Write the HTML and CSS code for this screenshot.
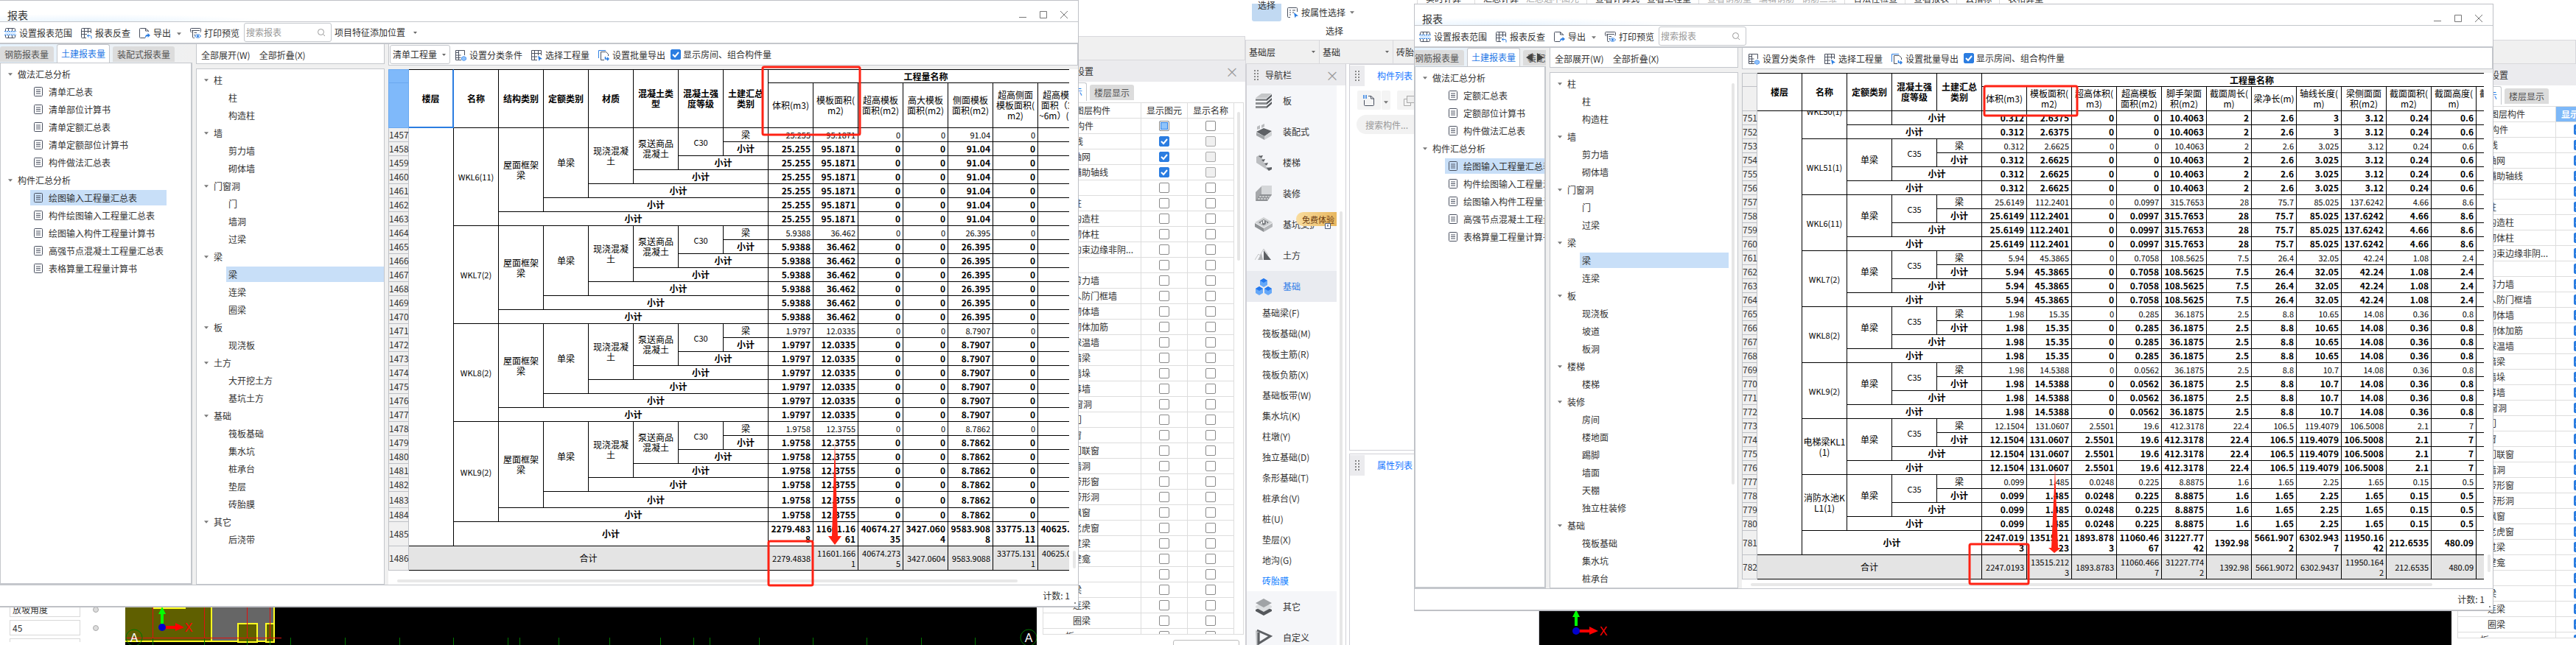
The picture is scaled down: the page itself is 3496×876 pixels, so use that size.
FILE: index.html
```html
<!DOCTYPE html>
<html lang="zh-CN">
<head>
    <meta charset="UTF-8">
    <meta name="viewport" content="width=device-width, initial-scale=1.0">
    <title>报表</title>
    <link rel="stylesheet" href="styles.css">
</head>
<body>
    <svg class="sprite" aria-hidden="true">
        <symbol id="i-range" viewBox="0 0 16 16"><path fill="#d6e9ff" d="M1 5h14v6H1z"/><path fill="none" stroke="#4a5160" d="M1.500 5V2.500a1 1 0 0 1 1-1h11a1 1 0 0 1 1 1V5M1.500 11v2.500a1 1 0 0 0 1 1h11a1 1 0 0 0 1-1V11M5.500 1.500V5M10.500 1.500V5M5.500 11v3.500M10.500 11v3.500"/><path fill="none" stroke="#2b7de1" stroke-dasharray="2 1" d="M0 5.500h16M0 10.500h16"/></symbol>
        <symbol id="i-table" viewBox="0 0 16 16"><path fill="none" stroke="#4a5160" d="M14.500 8V2.500a1 1 0 0 0-1-1h-11a1 1 0 0 0-1 1v11a1 1 0 0 0 1 1H8M1.500 5.500h13M1.500 9.500H9M5.500 1.500v13M10.500 1.500V8"/><path fill="none" stroke="#2b7de1" d="M9.500 11.500h4a1.500 1.500 0 0 1 1.500 1.500v2.500M11.500 9.500l-2 2 2 2"/></symbol>
        <symbol id="i-export" viewBox="0 0 16 16"><path fill="none" stroke="#4a5160" d="M13.500 6V5l-4-3.500h-7a1 1 0 0 0-1 1v11a1 1 0 0 0 1 1H9M9.500 1.500V5h4"/><path fill="#2b7de1" d="M9 15c0-4 1-5 3.500-5V8l3.500 3-3.500 3v-2C11 12 10 13 9 15z"/></symbol>
        <symbol id="i-print" viewBox="0 0 16 16"><path fill="none" stroke="#4a5160" d="M3.500 6.500h-1a1 1 0 0 1-1-1v-3a1 1 0 0 1 1-1h12a1 1 0 0 1 1 1v3a1 1 0 0 1-1 1M3 4.500h11M4.500 4.500v9a1 1 0 0 0 1 1H7M6.500 7.500H10M6.500 10.500H8"/><path fill="#fff" stroke="#2b7de1" d="M7.500 12c2-3 6-3 8 0-2 3-6 3-8 0z"/><circle cx="11.500" cy="12" r="1.500" fill="#2b7de1"/></symbol>
        <symbol id="i-search" viewBox="0 0 12 12"><circle cx="5.500" cy="5.500" r="4" fill="none" stroke="#999"/><path stroke="#999" d="M8.500 8.500l2.500 2.500"/></symbol>
        <symbol id="i-class" viewBox="0 0 16 16"><path fill="none" stroke="#4a5160" d="M13.500 8V1.500h-12v13H9M5.500 1.500v13M1.500 4.500h4M1.500 8h7M1.500 11.500h7"/><path fill="#8fc1fb" stroke="#5a9df0" d="M12.500 9.500l3 1.500v3l-3 1.500-3-1.500v-3z"/></symbol>
        <symbol id="i-pick" viewBox="0 0 16 16"><path fill="none" stroke="#4a5160" d="M14.500 8V1.500h-13v13H9M1.500 5.500h13M1.500 10H9M5.500 1.500v13M10.500 1.500V8"/><path fill="#2b7de1" d="M10 8.500l6 4.500-3 .5-1.500 2.500z"/></symbol>
        <symbol id="i-batch" viewBox="0 0 16 16"><path fill="none" stroke="#2b7de1" d="M1.500 12V1.500H11"/><path fill="none" stroke="#4a5160" d="M14.500 9V6.500l-3-3h-7v11H9"/><path fill="none" stroke="#2b7de1" stroke-width="1.500" d="M10.500 10v3h4M13 11l2 2-2 2"/></symbol>
        <symbol id="i-doc" viewBox="0 0 12 13"><rect x=".5" y=".5" width="11" height="12" rx="1" fill="none" stroke="#4a5160"/><path stroke="#4a5160" d="M3 4h6M3 6.500h6M3 9h6"/></symbol>
        <symbol id="i-attr" viewBox="0 0 16 16"><path fill="none" stroke="#4a5160" d="M14.500 7V2.500a1 1 0 0 0-1-1h-11a1 1 0 0 0-1 1v11a1 1 0 0 0 1 1H5M4 5h2M8 5h4M4 8h2M8 8h2M4 11h2"/><path fill="#2b7de1" d="M10 8l6 4.500-3 .5-1.500 2.500z"/></symbol>
        <symbol id="i-new" viewBox="0 0 16 16"><path fill="none" stroke="#4a5160" d="M7 1.500h4l3.500 3.500v8.500a1 1 0 0 1-1 1h-11a1 1 0 0 1-1-1V7M10.500 1.500V5h4"/><path stroke="#2b7de1" stroke-width="5" stroke-dasharray="1 1" d="M0 2.500h5"/></symbol>
        <symbol id="i-copy" viewBox="0 0 16 16"><rect x="5.500" y="1.500" width="11" height="9" fill="#eee" stroke="#aaa"/><path fill="none" stroke="#aaa" d="M5 5.500H1.500v9h9V11"/></symbol>
        <symbol id="i-lock" viewBox="0 0 10 10"><path fill="#fff" stroke="#4a5a78" d="M1.500 2.500h7v7h-7z"/><path stroke="#4a5a78" d="M5 4v3M4 5h2"/></symbol>
        <symbol id="n-slab" viewBox="0 0 24 24"><path fill="#c4c6c8" d="M1 8L9 2h14l-7 6z"/><path fill="#8e9194" d="M1 9h15v3H1zM1 14h15v3H1zM1 19h15v3H1z"/><path fill="#55585c" d="M16 9l7-6v3l-7 6zM16 14l7-6v3l-7 6zM16 19l7-6v3l-7 6z"/></symbol>
        <symbol id="n-prefab" viewBox="0 0 24 24"><path fill="#b9bbbe" d="M3 5l4-2v5L3 9zM9 3l4-2v4L9 7z"/><path fill="#5d6064" d="M2 12l10-5 11 4-10 7z"/><path fill="#a0a3a6" d="M2 13l11 5v5L2 17z"/><path fill="#d0d2d4" d="M13 18l10-6v5l-10 6z"/></symbol>
        <symbol id="n-stair" viewBox="0 0 24 24"><path fill="#bcbec1" d="M2 4l5-3v4l4 2v4l4 2v4l4 2v4L2 12z"/><path fill="#5d6064" d="M5 3l6-1-2 4zM9 8l5-1-2 4zM13 13l5-1-2 4zM16 19l7-1v3l-4 2z"/></symbol>
        <symbol id="n-finish" viewBox="0 0 24 24"><path fill="#d5d7d9" d="M9 1h14v14H9z"/><path fill="#a6a8ab" d="M1 10l8-8v12l-8 8z"/><path fill="#8e9194" d="M1 22l6-9h16l-6 9z"/><path stroke="#fff" stroke-dasharray="3 1" d="M6 16h14M4 19h14"/></symbol>
        <symbol id="n-pit" viewBox="0 0 24 24"><path fill="#cfd1d3" d="M12 2l12 7-12 7L0 9z"/><path fill="#7b7e82" d="M12 5l7 4-7 4-7-4z"/><path fill="#e6e7e8" d="M11 6h2v4h-2zM8 8h2v3H8zM15 8h1v3h-1z"/><path fill="#8e9194" d="M0 10l12 7v5L0 15z"/><path fill="#b4b6b9" d="M24 10l-12 7v5l12-7z"/></symbol>
        <symbol id="n-earth" viewBox="0 0 24 24"><path fill="none" stroke="#c4c6c8" d="M0 18l5-8 2 2 5-9 6 8"/><path fill="#b4b6b9" d="M4 18l5-9 2 9z"/><path fill="#5d6064" d="M12 18V5l10 13z"/></symbol>
        <symbol id="n-found" viewBox="0 0 24 24"><g fill="#66a8f8"><path d="M12 1l5 3v6l-5 3-5-3V4z"/><path d="M6 12l5 3v6l-5 3-5-3v-6z"/><path d="M18 12l5 3v6l-5 3-5-3v-6z"/></g><g fill="#2478ee"><path d="M12 1l5 3-5 3-5-3zM6 12l5 3-5 3-5-3zM18 12l5 3-5 3-5-3z"/></g></symbol>
        <symbol id="n-other" viewBox="0 0 24 24"><path fill="#55585c" d="M1 16l11-5 11 5v2l-11 6-11-6z"/><path fill="#dcdee0" d="M1 11l11-5 11 5v2l-11 6-11-6z"/><path fill="#a0a3a6" d="M12 1l11 6-11 6L1 7z"/></symbol>
        <symbol id="n-custom" viewBox="0 0 24 24"><path fill="#c4c6c8" d="M1 2l6 4v12l-4 6H2z"/><path fill="none" stroke="#5d6064" stroke-width="3" d="M3 2l18 8L5 20V5"/></symbol>
        <symbol id="i-caret" viewBox="0 0 7 4"><path fill="#777" d="M0 0h7L3.500 4z"/></symbol>
    </svg>

    <div class="desktop">
        <div class="column">
            <div class="app">
                <div class="ribbon"></div>
                <div class="level-bar"></div>
                <div class="workspace">
                    <section class="prop-panel">
                        <div class="prop-row"><input aria-label="放坡角度名称" value="放坡角度"><i></i></div>
                        <div class="prop-row"><input aria-label="放坡角度" value="45"><i></i></div>
                        <div class="prop-row"><input aria-label="混凝土" value="混凝土"></div>
                    </section>
                    <div class="canvas">
                        <svg width="1237" height="52" viewBox="170 824 1237 52">
                            <path fill="#5f5f00" d="M170 824h116v48H170z"/>
                            <path fill="#666" d="M288 824h83v46h-83z"/>
                            <path fill="none" stroke="#ff2" stroke-width="2" d="M207 826h45M287 824v48M372 824v48M170 871h203"/>
                            <path fill="#5f5f00" stroke="#ff2" stroke-width="2" d="M323 847h26v25h-26zM361 847h11v25h-11z"/>
                            <path stroke="#e01010" d="M207.500 824v42M277.500 824v42M335.500 824v42M366.500 824v42M170 866.500h212"/>
                            <path stroke="#070" d="M207.500 867v9M277.500 867v9M335.500 867v9M366.500 867v9M394.500 866v10M468.500 866v10M542.500 866v10M615.500 866v10M689.500 866v10M705.500 866v10M758.500 866v10M827.500 866v10M896.500 866v10M941.500 866v10M963.500 866v10M1030.500 866v10M1103.500 866v10M1176.500 866v10M1250.500 866v10M1323.500 866v10"/>
                            <circle cx="182" cy="866" r="11" fill="none" stroke="#070"/>
                            <circle cx="1396" cy="866" r="11" fill="none" stroke="#070"/>
                            <path fill="#0f0" d="M218 848v-14h-3l5-10 5 10h-3v14z"/>
                            <path fill="#f00" d="M224 850h14v-4l12 6-12 5v-3h-14z"/>
                            <circle cx="220" cy="852" r="5" fill="#00c"/>
                            <text x="182" y="872" class="axis">A</text>
                            <text x="1396" y="872" class="axis">A</text>
                            <text x="256" y="858" class="axis-x">X</text>
                        </svg>
                    </div>
                    <section class="layer-panel" data-state="mixed"></section>
                </div>
            </div>

            <div class="window window-left">
                <header class="titlebar">
                    <h1>报表</h1>
                    <div class="win-buttons">
                        <button aria-label="最小化"><svg viewBox="0 0 10 10"><path d="M0 8.500h10"/></svg></button>
                        <button aria-label="最大化"><svg viewBox="0 0 10 10"><path d="M.5.500h9v9h-9z"/></svg></button>
                        <button aria-label="关闭"><svg viewBox="0 0 10 10"><path d="M0 0l10 10M10 0L0 10"/></svg></button>
                    </div>
                </header>
                <div class="toolbar">
                    <button><svg class="ico"><use href="#i-range"/></svg>设置报表范围</button>
                    <button><svg class="ico"><use href="#i-table"/></svg>报表反查</button>
                    <button><svg class="ico"><use href="#i-export"/></svg>导出<svg class="caret"><use href="#i-caret"/></svg></button>
                    <button><svg class="ico"><use href="#i-print"/></svg>打印预览</button>
                    <label class="search"><input type="search" placeholder="搜索报表" aria-label="搜索报表"><svg><use href="#i-search"/></svg></label>
                    <select class="feature" aria-label="项目特征添加位置"><option>项目特征添加位置</option></select>
                </div>
                <div class="content">
                    <div class="side">
                        <div class="tabs">
                            <button>钢筋报表量</button>
                            <button class="active">土建报表量</button>
                            <button>装配式报表量</button>
                        </div>
                        <div class="tree reports" id="reportsLeft"></div>
                    </div>
                    <div class="middle">
                        <div class="tree-head"><button>全部展开(W)</button><button>全部折叠(X)</button></div>
                        <div class="tree" id="partsLeft"></div>
                    </div>
                    <div class="main">
                        <div class="sheet-head">
                            <select class="bill" aria-label="工程量类型"><option>清单工程量</option></select>
                            <button><svg class="ico"><use href="#i-class"/></svg>设置分类条件</button>
                            <button><svg class="ico"><use href="#i-pick"/></svg>选择工程量</button>
                            <button><svg class="ico"><use href="#i-batch"/></svg>设置批量导出</button>
                            <label><input type="checkbox" checked>显示房间、组合构件量</label>
                        </div>
                        <div class="sheet tall selected" id="sheetLeft"></div>
                        <div class="scroll-x"></div>
                        <div class="scroll-y"></div>
                    </div>
                </div>
                <footer class="status">计数: 1</footer>
                <svg class="marks">
                    <rect x="1036" y="91" width="132" height="92" rx="2"/>
                    <rect x="1044" y="735" width="60" height="60" rx="2"/>
                    <path d="M1134 600l4 128h5l-9 12-9-12h5z"/>
                </svg>
            </div>
        </div>

        <div class="column">
            <div class="ribbon-labels">
                <span>实时计算</span>
                <span>汇总计算<em>汇总选中图元</em></span>
                <span>查看计算式<b>查看工程量</b></span>
                <span><em>查看钢筋量</em><em>编辑钢筋</em><em>钢筋三维</em></span>
                <span>合法性检查</span>
                <span>查看报表</span>
                <span>云指标</span>
                <span>表格算量</span>
            </div>
            <div class="app">
                <div class="ribbon">
                    <button class="pick">选择</button>
                    <div class="pick-group">
                        <button><svg class="ico"><use href="#i-attr"/></svg>按属性选择<svg class="caret"><use href="#i-caret"/></svg></button>
                        <span>选择</span>
                    </div>
                </div>
                <div class="level-bar">
                    <select aria-label="楼层"><option>基础层</option></select>
                    <select aria-label="构件大类"><option>基础</option></select>
                    <select aria-label="构件类型"><option>砖胎膜</option></select>
                </div>
                <div class="workspace">
                    <nav class="nav-panel">
                        <div class="panel-head"><i class="grip"></i>导航栏<button class="close" aria-label="关闭">×</button></div>
                        <div class="nav-list" id="navList"></div>
                    </nav>
                    <div class="component-panels">
                        <section>
                            <div class="dock-tab"><i class="grip"></i><a href="#components">构件列表</a></div>
                            <div class="component-tools">
                                <button aria-label="新建"><svg class="ico"><use href="#i-new"/></svg></button>
                                <button class="drop" aria-label="新建选项"><svg class="caret"><use href="#i-caret"/></svg></button>
                                <button aria-label="复制"><svg class="ico"><use href="#i-copy"/></svg></button>
                            </div>
                            <input class="pill" placeholder="搜索构件..." aria-label="搜索构件">
                        </section>
                        <section>
                            <div class="dock-tab"><i class="grip"></i><a href="#attributes">属性列表</a></div>
                        </section>
                    </div>
                    <div class="canvas">
                        <svg width="1238" height="52" viewBox="2089 829 1238 52">
                            <path fill="#0f0" d="M2137 850v-12h-3l5-10 5 10h-3v12z"/>
                            <path fill="#f00" d="M2143 855h14v-4l12 6-12 5v-3h-14z"/>
                            <circle cx="2139" cy="857" r="5" fill="#00c"/>
                            <text x="2176" y="863" class="axis-x">X</text>
                        </svg>
                    </div>
                    <section class="layer-panel" data-state="all"></section>
                </div>

                <div class="window window-right">
                    <header class="titlebar">
                        <h1>报表</h1>
                        <div class="win-buttons">
                            <button aria-label="最小化"><svg viewBox="0 0 10 10"><path d="M0 8.500h10"/></svg></button>
                            <button aria-label="最大化"><svg viewBox="0 0 10 10"><path d="M.5.500h9v9h-9z"/></svg></button>
                            <button aria-label="关闭"><svg viewBox="0 0 10 10"><path d="M0 0l10 10M10 0L0 10"/></svg></button>
                        </div>
                    </header>
                    <div class="toolbar">
                        <button><svg class="ico"><use href="#i-range"/></svg>设置报表范围</button>
                        <button><svg class="ico"><use href="#i-table"/></svg>报表反查</button>
                        <button><svg class="ico"><use href="#i-export"/></svg>导出<svg class="caret"><use href="#i-caret"/></svg></button>
                        <button><svg class="ico"><use href="#i-print"/></svg>打印预览</button>
                        <label class="search"><input type="search" placeholder="搜索报表" aria-label="搜索报表"><svg><use href="#i-search"/></svg></label>
                    </div>
                    <div class="content">
                        <div class="side narrow">
                            <div class="tabs">
                                <button>钢筋报表量</button>
                                <button class="active">土建报表量</button>
                                <button>装配式报表量</button>
                                <svg class="tab-arrows" viewBox="0 0 24 12"><path d="M9 0v12L0 6zM15 0v12l9-6z"/></svg>
                            </div>
                            <div class="tree reports" id="reportsRight"></div>
                        </div>
                        <div class="middle">
                            <div class="tree-head"><button>全部展开(W)</button><button>全部折叠(X)</button></div>
                            <div class="tree scrolling" id="partsRight"></div>
                        </div>
                        <div class="main">
                            <div class="sheet-head">
                                <button><svg class="ico"><use href="#i-class"/></svg>设置分类条件</button>
                                <button><svg class="ico"><use href="#i-pick"/></svg>选择工程量</button>
                                <button><svg class="ico"><use href="#i-batch"/></svg>设置批量导出</button>
                                <label><input type="checkbox" checked>显示房间、组合构件量</label>
                            </div>
                            <div class="sheet" id="sheetRight"></div>
                            <div class="scroll-x"></div>
                            <div class="scroll-y"></div>
                        </div>
                    </div>
                    <footer class="status">计数: 1</footer>
                    <svg class="marks">
                        <rect x="774" y="112" width="126" height="40" rx="2"/>
                        <rect x="754" y="734" width="80" height="54" rx="2"/>
                        <path d="M870 632l4 107h4l-9 7-8-7h4z"/>
                    </svg>
                </div>
            </div>
        </div>
    </div>

    <script>
        const reportTrees = {
            reportsLeft: [
                ['做法汇总分析', '清单汇总表', '清单部位计算书', '清单定额汇总表', '清单定额部位计算书', '构件做法汇总表'],
                ['构件汇总分析', '*绘图输入工程量汇总表', '构件绘图输入工程量汇总表', '绘图输入构件工程量计算书', '高强节点混凝土工程量汇总表', '表格算量工程量计算书']
            ],
            reportsRight: [
                ['做法汇总分析', '定额汇总表', '定额部位计算书', '构件做法汇总表'],
                ['构件汇总分析', '*绘图输入工程量汇总表', '构件绘图输入工程量汇总表', '绘图输入构件工程量计算书', '高强节点混凝土工程量汇总表', '表格算量工程量计算书']
            ]
        };
        const partTrees = {
            partsLeft: [
                ['柱', '柱', '构造柱'], ['墙', '剪力墙', '砌体墙'], ['门窗洞', '门', '墙洞', '过梁'],
                ['梁', '*梁', '连梁', '圈梁'], ['板', '现浇板'], ['土方', '大开挖土方', '基坑土方'],
                ['基础', '筏板基础', '集水坑', '桩承台', '垫层', '砖胎膜'], ['其它', '后浇带']
            ],
            partsRight: [
                ['柱', '柱', '构造柱'], ['墙', '剪力墙', '砌体墙'], ['门窗洞', '门', '过梁'],
                ['梁', '*梁', '连梁'], ['板', '现浇板', '坡道', '板洞'], ['楼梯', '楼梯'],
                ['装修', '房间', '楼地面', '踢脚', '墙面', '天棚', '独立柱装修'],
                ['基础', '筏板基础', '集水坑', '桩承台']
            ]
        };

        function treeHtml(groups, icon) {
            const leaf = (text) => {
                const on = text[0] === '*';
                return `<li><span class="leaf${on ? ' on' : ''}">${icon}${on ? text.slice(1) : text}</span></li>`;
            };
            return '<ul>' + groups.map(([head, ...items]) =>
                `<li><span class="branch"><svg class="caret"><use href="#i-caret"/></svg>${head}</span><ul>${items.map(leaf).join('')}</ul></li>`
            ).join('') + '</ul>';
        }
        for (const id in reportTrees) {
            document.getElementById(id).innerHTML = treeHtml(reportTrees[id], '<svg><use href="#i-doc"/></svg>');
        }
        for (const id in partTrees) {
            document.getElementById(id).innerHTML = treeHtml(partTrees[id], '');
        }

        // Each group is a chain of labels, every level closes with its own subtotal row
        const leftLabels = ['屋面框架梁', '单梁', '现浇混凝土', '泵送商品混凝土', 'C30', '梁'];
        const rightLabels = ['单梁', 'C35', '梁'];
        const sheets = {
            sheetLeft: {
                first: 1457,
                skip: 0,
                heads: ['楼层', '名称', '结构类别', '定额类别', '材质', '混凝土类型', '混凝土强度等级', '土建汇总类别'],
                values: ['体积(m3)', '模板面积(m2)', '超高模板面积(m2)', '高大模板面积(m2)', '侧面模板面积(m2)', '超高侧面模板面积(m2)', '超高模板<br>面积（3.6<br>~6m）(m2)'],
                labels: leftLabels,
                roomy: 1483,
                groups: [
                    ['WKL6(11)', '25.255 95.1871 0 0 91.04 0 0'],
                    ['WKL7(2)', '5.9388 36.462 0 0 26.395 0 0'],
                    ['WKL8(2)', '1.9797 12.0335 0 0 8.7907 0 0'],
                    ['WKL9(2)', '1.9758 12.3755 0 0 8.7862 0 0']
                ],
                total: '2279.4838 11601.1661 40674.2735 3427.0604 9583.9088 33775.1311 40625.0411'
            },
            sheetRight: {
                first: 749,
                skip: 2,
                heads: ['楼层', '名称', '定额类别', '混凝土强度等级', '土建汇总类别'],
                values: ['体积(m3)', '模板面积(m2)', '超高体积(m3)', '超高模板面积(m2)', '脚手架面积(m2)', '截面周长(m)', '梁净长(m)', '轴线长度(m)', '梁侧面面积(m2)', '截面面积(m2)', '截面高度(m)', '截面宽度(m)'],
                labels: rightLabels,
                groups: [
                    ['WKL50(1)', '0.312 2.6375 0 0 10.4063 2 2.6 3 3.12 0.24 0.6 0.4'],
                    ['WKL51(1)', '0.312 2.6625 0 0 10.4063 2 2.6 3.025 3.12 0.24 0.6 0.4'],
                    ['WKL6(11)', '25.6149 112.2401 0 0.0997 315.7653 28 75.7 85.025 137.6242 4.66 8.6 5.4'],
                    ['WKL7(2)', '5.94 45.3865 0 0.7058 108.5625 7.5 26.4 32.05 42.24 1.08 2.4 1.35'],
                    ['WKL8(2)', '1.98 15.35 0 0.285 36.1875 2.5 8.8 10.65 14.08 0.36 0.8 0.45'],
                    ['WKL9(2)', '1.98 14.5388 0 0.0562 36.1875 2.5 8.8 10.7 14.08 0.36 0.8 0.45'],
                    ['电梯梁KL1(1)', '12.1504 131.0607 2.5501 19.6 412.3178 22.4 106.5 119.4079 106.5008 2.1 7 4.2'],
                    ['消防水池KL1(1)', '0.099 1.485 0.0248 0.225 8.8875 1.6 1.65 2.25 1.65 0.15 0.5 0.3']
                ],
                total: '2247.0193 13515.2123 1893.8783 11060.4667 31227.7742 1392.98 5661.9072 6302.9437 11950.1642 212.6535 480.09 290.5'
            }
        };

        function sheetHtml(s) {
            const cols = '<colgroup><col class="no">' + '<col>'.repeat(s.heads.length + s.values.length) + '</colgroup>';
            const depth = s.labels.length + 1;
            const count = s.groups.length * depth;
            const nums = (line) => line.split(' ').map(v => `<td class="num">${v}</td>`).join('');
            const label = (text, span) => `<td rowspan="${span}"${/^[\w()]+$/.test(text) ? ' class="code"' : ''}>${text}</td>`;

            const head = '<thead><tr class="cap"><th class="no"></th>' +
                s.heads.map((h, i) => `<th rowspan="2"${i ? '' : ' class="floor"'}>${h}</th>`).join('') +
                `<th colspan="${s.values.length}" class="group">工程量名称</th></tr>` +
                '<tr class="names"><th class="no"></th>' +
                s.values.map(v => `<th${v.includes('<br>') ? ' class="preset"' : ''}>${v}</th>`).join('') + '</tr></thead>';

            let no = s.first;
            let rows = '';
            s.groups.forEach(([name, line], g) => {
                for (let r = 0; r < depth; r++) {
                    const cls = [r ? 'sub' : '', no === s.roomy ? 'roomy' : ''].join(' ').trim();
                    rows += `<tr${cls ? ` class="${cls}"` : ''}><th class="no">${no++}</th>`;
                    if (g === 0 && r === 0) rows += `<td class="floor" rowspan="${count + 1}"></td>`;
                    if (r === 0) {
                        rows += [name, ...s.labels].map((t, i) => label(t, depth - i)).join('');
                    } else {
                        rows += `<td colspan="${r}">小计</td>`;
                    }
                    rows += nums(line) + '</tr>';
                }
            });
            rows += `<tr class="sub last"><th class="no">${no++}</th><td colspan="${depth}">小计</td>${nums(s.total)}</tr>`;
            rows += `<tr class="total"><th class="no">${no}</th><td colspan="${depth + 1}">合计</td>${nums(s.total)}</tr>`;

            return `<table class="head">${cols}${head}</table>` +
                `<div class="rows"><table${s.skip ? ' class="scrolled"' : ''}>${cols}<tbody>${rows}</tbody></table></div>`;
        }
        for (const id in sheets) {
            document.getElementById(id).innerHTML = sheetHtml(sheets[id]);
        }

        const layers = [
            ['所有构件', 'all'], ['轴线', 'axis'], ['-轴网', 'axis'], ['-辅助轴线', 'axis'],
            ['柱'], ['-柱'], ['-构造柱'], ['-砌体柱'], ['-约束边缘非阴...'],
            ['墙'], ['-剪力墙'], ['-人防门框墙'], ['-砌体墙'], ['-砌体加筋'], ['-保温墙'], ['-暗梁'], ['-墙垛'], ['-幕墙'],
            ['门窗洞'], ['-门'], ['-窗'], ['-门联窗'], ['-墙洞'], ['-带形窗'], ['-带形洞'], ['-飘窗'], ['-老虎窗'], ['-过梁'], ['-壁龛'],
            ['梁'], ['-梁'], ['-连梁'], ['-圈梁'], ['板']
        ];
        document.querySelectorAll('.layer-panel').forEach(panel => {
            const every = panel.dataset.state === 'all';
            const rows = layers.map(([text, kind]) => {
                const child = text[0] === '-';
                const name = child ? text.slice(1) : text;
                const cls = kind === 'all' ? 'root' : child ? 'child' : 'parent';
                const shown = every || kind === 'axis' ? ' checked' : '';
                const partial = !every && kind === 'all' ? ' class="partial"' : '';
                const off = kind === 'axis' ? ' disabled' : '';
                return `<tr><td class="${cls}">${name}</td>` +
                    `<td><input type="checkbox" aria-label="显示图元 ${name}"${partial}${shown}></td>` +
                    `<td><input type="checkbox" aria-label="显示名称 ${name}"${off}></td></tr>`;
            }).join('');
            panel.innerHTML = '<div class="panel-head"><i class="grip"></i>显示设置<button class="close" aria-label="关闭">×</button></div>' +
                '<div class="tabs"><button class="active">图层显示</button><button>楼层显示</button></div>' +
                '<div class="layer-box"><table><colgroup><col class="layer"><col><col></colgroup>' +
                `<thead><tr><th class="layer-title">图层构件</th><th${every ? ' class="picked"' : ''}>显示图元</th><th>显示名称</th></tr></thead>` +
                `<tbody>${rows}</tbody></table></div><div class="layer-foot"><button aria-label="恢复默认"></button></div>`;
        });

        const nav = [
            ['板', 'slab'], ['装配式', 'prefab'], ['楼梯', 'stair'], ['装修', 'finish'], ['基坑支护', 'pit'], ['土方', 'earth'],
            ['基础', 'found', ['基础梁(F)', '筏板基础(M)', '筏板主筋(R)', '筏板负筋(X)', '基础板带(W)', '集水坑(K)', '柱墩(Y)', '独立基础(D)', '条形基础(T)', '桩承台(V)', '桩(U)', '垫层(X)', '地沟(G)', '砖胎膜']],
            ['其它', 'other'], ['自定义', 'custom']
        ];
        document.getElementById('navList').innerHTML = nav.map(([text, icon, subs]) =>
            `<a href="#${icon}" class="nav-item${subs ? ' active' : ''}"><svg><use href="#n-${icon}"/></svg>${text}` +
            (icon === 'pit' ? '<span class="badge">免费体验</span><svg class="lock"><use href="#i-lock"/></svg>' : '') + '</a>' +
            (subs ? '<ul>' + subs.map(s => `<li${s === '砖胎膜' ? ' class="current"' : ''}>${s}</li>`).join('') + '</ul>' : '')
        ).join('');
    </script>
</body>
</html>
```
FILE: styles.css
```css
* {
    box-sizing: border-box;
}
body {
    margin: 0;
    font-family: "Noto Sans CJK SC", "Noto Sans", sans-serif;
    font-size: 12px;
    line-height: 16px;
    color: #333;
    background: #fff;
}
button, input, select {
    font: inherit;
    color: inherit;
    margin: 0;
    padding: 0;
    border: none;
    background: none;
    outline: none;
    white-space: nowrap;
}
select {
    appearance: none;
    background: url("data:image/svg+xml,%3Csvg xmlns='http://www.w3.org/2000/svg' width='5' height='3'%3E%3Cpath fill='%23666' d='M0 0h5L2.500 3z'/%3E%3C/svg%3E") no-repeat right 5px center;
}
ul {
    list-style: none;
    margin: 0;
    padding: 0;
}
a {
    color: inherit;
    text-decoration: none;
}
table {
    border-spacing: 0;
    table-layout: fixed;
}
th, td {
    padding: 0;
    font-weight: normal;
}
.sprite {
    position: absolute;
    width: 0;
    height: 0;
}
.ico {
    width: 16px;
    height: 16px;
    margin-right: 4px;
    flex: none;
}
.caret {
    width: 6px;
    height: 4px;
    flex: none;
}
input[type=checkbox] {
    appearance: none;
    width: 14px;
    height: 14px;
    border: 1px solid #8a8a8a;
    border-radius: 2px;
    background: #fff;
    flex: none;
}
input[type=checkbox]:checked {
    border-color: #2b7de1;
    background: #2b7de1 url("data:image/svg+xml,%3Csvg xmlns='http://www.w3.org/2000/svg' viewBox='0 0 12 12'%3E%3Cpath fill='none' stroke='%23fff' stroke-width='2' d='M2 6l3 3 5-6'/%3E%3C/svg%3E") center / 12px no-repeat;
}
input[type=checkbox].partial {
    background: #8fc4fb;
    box-shadow: inset 0 0 0 1px #fff, inset 0 0 0 2px #2b7de1;
}
input[type=checkbox]:disabled:not(:checked) {
    border-color: #aaa;
    background: #f0f0f0;
}

/* desktop and the application behind the report windows */
.desktop {
    display: grid;
    grid-template-columns: 1690fr 1806fr;
    height: 100vh;
    overflow: hidden;
}
.column {
    position: relative;
    display: flex;
    flex-direction: column;
    min-width: 0;
    height: 100vh;
}
.app {
    position: relative;
    flex: none;
    display: flex;
    flex-direction: column;
    min-width: 0;
    height: 100%;
}
.ribbon-labels {
    display: flex;
    align-items: flex-end;
    flex: none;
    height: 5px;
    padding-left: 233px;
}
.ribbon-labels span {
    display: flex;
    gap: 10px;
    padding: 0 10px 0 11px;
    border-left: 1px solid #ddd;
    line-height: 14px;
    white-space: nowrap;
}
.ribbon-labels span:nth-child(1) {
    padding-right: 18px;
}
.ribbon-labels em, .ribbon-labels b {
    font-style: normal;
    font-weight: normal;
}
.ribbon-labels em {
    color: #aaa;
}
.ribbon {
    display: flex;
    flex: none;
    height: 49px;
    padding-left: 9px;
}
.pick {
    width: 40px;
    height: 24px;
    padding-bottom: 22px;
    background: #c1d9f2;
    border-radius: 0 0 3px 3px;
    line-height: 4px;
}
.pick-group {
    display: flex;
    flex-direction: column;
    align-items: center;
    gap: 9px;
    padding: 4px 0 0 7px;
}
.pick-group button, .toolbar button, .sheet-head button {
    display: flex;
    align-items: center;
}
.pick-group .caret {
    margin-left: 6px;
}
.pick-group span {
    padding-left: 38px;
}
.level-bar {
    display: flex;
    flex: none;
    height: 33px;
    background: #f0f0f0;
    border: 1px solid #d8d8dc;
}
.level-bar select {
    width: 100px;
    padding-left: 4px;
    border-right: 1px solid #d8d8dc;
}
.workspace {
    display: flex;
    flex: 1;
    min-height: 0;
}
.canvas {
    display: flex;
    align-items: flex-end;
    flex: 1;
    min-width: 0;
    overflow: hidden;
    background: #000;
}
.canvas svg {
    flex: none;
}
.axis, .axis-x {
    font: 16px "Liberation Sans", sans-serif;
    fill: #fff;
    text-anchor: middle;
}
.axis-x {
    fill: #f00;
}
.prop-panel {
    display: flex;
    flex-direction: column;
    justify-content: flex-end;
    gap: 4px;
    width: 170px;
    padding: 0 0 4px 13px;
    border-right: 4px solid #fff;
}
.prop-row {
    display: flex;
    align-items: center;
    gap: 17px;
}
.prop-row input {
    width: 96px;
    height: 21px;
    padding-left: 3px;
    border: 1px solid #d8d8d8;
}
.prop-row:last-child {
    height: 5px;
    overflow: hidden;
    align-items: flex-start;
}
.prop-row i {
    width: 8px;
    height: 8px;
    border: 1px solid #aaa;
    border-radius: 50%;
    background: #ddd;
}
.panel-head {
    display: flex;
    align-items: center;
    flex: none;
    height: 29px;
    padding: 0 9px 0 10px;
    background: #ebebee;
}
.close {
    margin-left: auto;
    font-size: 18px;
    color: #999;
}
.grip {
    width: 6px;
    height: 14px;
    margin-right: 9px;
    background: repeating-linear-gradient(transparent 0 2px, #ebebee 2px 4px), linear-gradient(90deg, #888 2px, transparent 2px 4px, #888 4px);
}
.nav-panel {
    display: flex;
    flex-direction: column;
    width: 137px;
    border: solid #d0d0d6;
    border-width: 0 1px 0 2px;
    overflow: hidden;
}
.nav-list {
    position: relative;
    padding-right: 12px;
}
.nav-list::after {
    content: "";
    position: absolute;
    right: 4px;
    top: 171px;
    bottom: 0;
    width: 4px;
    border-radius: 2px;
    background: #e6e6e6;
}
.nav-item {
    position: relative;
    display: flex;
    align-items: center;
    height: 42px;
    padding-left: 11px;
    background: #f5f6f9;
}
.nav-item svg {
    width: 24px;
    height: 24px;
    margin-right: 14px;
}
.nav-item.active {
    background: #e9ebf0;
    color: #2f7de8;
}
.nav-list ul {
    padding-top: 1px;
}
.nav-list li {
    height: 28px;
    padding-left: 21px;
    line-height: 28px;
}
.nav-list .current {
    color: #0a7cff;
}
.badge {
    position: absolute;
    right: 0;
    top: 4px;
    padding: 2px 3px 1px 8px;
    border-radius: 10px 0 0 10px;
    background: linear-gradient(90deg, #f9dd9f, #e8b75f);
    color: #6b3a10;
    font-size: 11px;
}
.nav-item .lock {
    position: absolute;
    right: 7px;
    top: 17px;
    width: 10px;
    height: 10px;
    margin: 0;
}
.component-panels {
    display: flex;
    flex-direction: column;
    gap: 4px;
    width: 258px;
    margin-left: 4px;
}
.component-panels section {
    flex: 264 1 0;
    border: 1px solid #d0d0d6;
}
.component-panels section:first-child {
    flex-grow: 526;
}
.dock-tab {
    display: flex;
    align-items: center;
    height: 29px;
    color: #1677ff;
}
.dock-tab .grip {
    outline: 7px solid #ebebee;
    margin: 0 24px 0 7px;
}
.component-tools {
    display: flex;
    gap: 1px;
    padding: 6px 0 0 10px;
}
.component-tools button {
    width: 32px;
    height: 26px;
    background: #f4f4f4;
    border-radius: 2px;
}
.component-tools .ico {
    margin: 4px 0 0;
}
.component-tools .drop {
    width: 12px;
    margin-right: 8px;
}
.pill {
    width: 200px;
    height: 26px;
    margin: 7px 0 0 9px;
    padding-left: 12px;
    border-radius: 13px;
    background: #f2f2f2;
}
.layer-panel {
    display: flex;
    flex-direction: column;
    flex: none;
    width: 283px;
    overflow: hidden;
}
.column:last-child .layer-panel {
    width: 169px;
}
.layer-panel .panel-head {
    width: 283px;
    padding-left: 14px;
}
.layer-panel .tabs {
    width: 283px;
    height: 26px;
    padding-left: 8px;
}
.layer-box {
    flex: 1;
    width: 273px;
    min-height: 0;
    margin: 2px 0 0 8px;
    border: 1px solid #ddd;
    overflow: hidden;
    position: relative;
}
.layer-box::after {
    content: "";
    position: absolute;
    right: 4px;
    top: 12px;
    width: 4px;
    height: 202px;
    border-radius: 2px;
    background: #e6e6e6;
}
.layer-box table {
    width: 259px;
}
.layer-box .layer {
    width: 133px;
}
.layer-box th, .layer-box td {
    height: 21px;
    border: solid #ddd;
    border-width: 0 1px 1px 0;
    text-align: center;
    white-space: nowrap;
}
.layer-box .layer-title {
    padding-left: 2px;
}
.layer-box input {
    display: block;
    margin: 0 auto;
}
.layer-box td:first-child {
    text-align: left;
}
.layer-box .root {
    padding-left: 20px;
}
.layer-box .parent {
    padding-left: 30px;
}
.layer-box .child {
    padding-left: 40px;
}
.layer-box .picked {
    background: #7db8f8;
    color: #fff;
    font-weight: bold;
}
.layer-foot {
    height: 14px;
    padding: 7px 0 0 185px;
}
.layer-foot button {
    width: 90px;
    height: 24px;
    border: 1px solid #bbb;
    border-radius: 3px;
}

/* report windows */
.window {
    position: absolute;
    top: 0;
    bottom: 51px;
    width: calc(50vw - 283px);
    display: flex;
    flex-direction: column;
    border: solid #bfc1c6;
    border-width: 1px 1px 2px;
    background: #fff;
}
.window-left {
    left: -1px;
}
.window-right {
    left: 229px;
}
.titlebar {
    display: flex;
    align-items: center;
    justify-content: space-between;
    flex: none;
    height: 29px;
    padding: 10px 14px 0 10px;
    border-bottom: 1px solid #c4c7cc;
    background: radial-gradient(ellipse 240px 10px at 120px 100%, #eaf5ff, #fff);
}
.titlebar h1 {
    margin: 0;
    font-size: 14px;
    font-weight: normal;
}
.win-buttons {
    display: flex;
    gap: 18px;
}
.win-buttons button {
    width: 10px;
    height: 10px;
}
.win-buttons svg {
    display: block;
    width: 10px;
    height: 10px;
    fill: none;
    stroke: #777;
}
.toolbar {
    display: flex;
    align-items: center;
    flex: none;
    gap: 11px;
    height: 30px;
    padding: 1px 6px 0;
    border-bottom: 2px solid #c4c7cc;
}
.toolbar .caret {
    margin: 2px 0 0 8px;
}
.search {
    display: flex;
    align-items: center;
    width: 119px;
    height: 26px;
    margin: -1px 0 0 -5px;
    padding: 0 7px 0 2px;
    border: 1px solid #c4c7cc;
    border-radius: 3px;
}
.search input {
    flex: 1;
    min-width: 0;
}
.search svg {
    width: 12px;
    height: 12px;
}
input::placeholder {
    color: #999;
    opacity: 1;
}
.feature {
    width: 112px;
    margin: -1px 0 0 -7px;
    background-position-x: right;
}
.content {
    display: flex;
    flex: 1;
    gap: 5px;
    min-height: 0;
    background: #f0f0f0;
}
.side {
    display: flex;
    flex-direction: column;
    width: 261px;
    flex: none;
}
.side.narrow {
    width: 178px;
}
.tabs {
    position: relative;
    display: flex;
    align-items: flex-end;
    gap: 4px;
    flex: none;
    height: 25px;
    overflow: hidden;
}
.side .tabs {
    background: linear-gradient(90deg, #e6f3fe, #f0f0f0);
}
.narrow .tabs button:first-child {
    margin-left: -6px;
}
.tabs button {
    flex: none;
    height: 21px;
    margin-bottom: 1px;
    padding: 0 6px;
    border-radius: 3px 3px 0 0;
    background: #dcdcdc;
    color: #555;
}
.side .tabs button:first-child {
    padding-right: 7px;
}
.tabs .active {
    height: 25px;
    margin-bottom: 0;
    padding: 0 5px;
    border: 1px solid #c4c7cc;
    border-bottom: none;
    background: #fff;
    color: #1f78e6;
}
.tab-arrows {
    position: absolute;
    right: 3px;
    top: 7px;
    width: 24px;
    height: 12px;
    fill: #444;
}
.tree {
    position: relative;
    flex: 1;
    min-height: 0;
    padding-top: 3px;
    overflow: hidden;
    border: 1px solid #c4c7cc;
    background: #fff;
}
.side .tree {
    border-right-width: 2px;
    border-bottom-width: 2px;
}
.reports > ul {
    width: max-content;
}
.branch {
    display: flex;
    align-items: center;
    height: 24px;
    padding-left: 10px;
}
.branch .caret {
    margin-right: 7px;
}
.leaf {
    display: flex;
    align-items: center;
    height: 21px;
    margin: 1px 0 2px 40px;
    padding-left: 3px;
    white-space: nowrap;
}
.reports .leaf {
    padding: 0 4px 0 5px;
}
.leaf svg {
    width: 12px;
    height: 13px;
    margin-right: 8px;
}
.leaf.on {
    background: #c8dff8;
}
li > ul > li {
    height: 24px;
    overflow: hidden;
}
.scrolling > ul {
    margin-right: 12px;
}
.scrolling::after {
    content: "";
    position: absolute;
    right: 4px;
    top: 14px;
    height: 78%;
    width: 4px;
    border-radius: 2px;
    background: #e6e6e6;
}
.middle {
    display: flex;
    flex-direction: column;
    gap: 6px;
    flex: none;
    width: 256px;
}
.tree-head {
    display: flex;
    align-items: center;
    gap: 12px;
    height: 27px;
    padding: 3px 6px 0;
    border: 1px solid #c4c7cc;
    border-top: none;
    background: #fff;
}
.main {
    position: relative;
    display: flex;
    flex-direction: column;
    flex: 1;
    min-width: 0;
    background: linear-gradient(#f0f0f0 34px, #fff 34px);
}
.sheet-head {
    display: flex;
    align-items: center;
    gap: 11px;
    flex: none;
    height: 29px;
    margin-bottom: 5px;
    padding: 2px 7px 0;
    border: solid #c4c7cc;
    border-width: 0 1px 1px;
    background: #fff;
}
.sheet-head label {
    display: flex;
    align-items: center;
    gap: 3px;
    margin: -3px 0 0 -4px;
}
.bill {
    width: 82px;
    height: 26px;
    margin: -2px -5px 0 -6px;
    padding-left: 3px;
    border: 1px solid #c4c7cc;
    border-radius: 3px;
}

/* quantity sheet */
.sheet {
    display: flex;
    flex-direction: column;
    min-height: 0;
    margin-right: 12px;
    overflow: hidden;
    line-height: 14px;
    color: #000;
}
.sheet table {
    width: 1px;
    flex: none;
}
.sheet col {
    width: 61px;
}
.sheet col.no {
    width: 21px;
}
.tall col.no {
    width: 28px;
}
.sheet th, .sheet td {
    padding: 0 1px;
    border: solid #000;
    border-width: 0 1px 1px 0;
    text-align: center;
    line-break: anywhere;
    background: #fff;
}
.sheet tr {
    height: 19px;
}
.sheet .cap th {
    border-top-width: 1px;
    font-weight: bold;
}
.sheet .names {
    height: 33px;
}
.tall .names {
    height: 61px;
}
.sheet .group {
    border-right-width: 0;
}
.sheet .preset {
    white-space: nowrap;
}
.sheet th.no {
    padding: 0;
    border-color: #bfc1c6;
    border-left: 1px solid #bfc1c6;
    background: #f0f0f0;
    color: #333;
    white-space: nowrap;
}
.selected .head .no {
    border-color: #6aa8ef;
    background: #7fb9fa;
}
.selected .head .floor {
    border-color: #000 #2b7de1 #2b7de1;
    border-width: 1px 2px 2px 0;
}
.sheet .code {
    font-size: 11px;
}
.sheet td.num {
    padding: 0 3px 0 2px;
    font-size: 11px;
    text-align: right;
}
.sheet .sub td {
    font-weight: bold;
}
.sheet .sub td.num {
    font-size: 12px;
}
.sheet .roomy {
    height: 22px;
}
.sheet .last, .sheet .total {
    height: 33px;
}
.sheet .total td {
    background: #e4e4e4;
}
.rows {
    overflow: hidden;
}
.rows .scrolled {
    margin-top: -38px;
}
.scroll-x, .scroll-y {
    position: absolute;
    border-radius: 2px;
    background: #e8e8e8;
}
.scroll-x {
    left: 12px;
    right: 82px;
    bottom: 3px;
    height: 4px;
}
.scroll-y {
    right: 3px;
    bottom: 22px;
    width: 4px;
    height: 24px;
}
.status {
    display: flex;
    align-items: center;
    justify-content: flex-end;
    flex: none;
    height: 29px;
    padding-right: 11px;
    border-top: 1px solid #c4c7cc;
    background: radial-gradient(circle, #888 1px, transparent 1px) right 2px bottom 2px / 4px 4px no-repeat #fff;
}
.marks {
    position: absolute;
    left: -1px;
    top: -1px;
    width: 100%;
    height: 100%;
    pointer-events: none;
}
.marks rect {
    fill: none;
    stroke: #ff2214;
    stroke-width: 3;
}
.marks path {
    fill: #ff2214;
}
```
